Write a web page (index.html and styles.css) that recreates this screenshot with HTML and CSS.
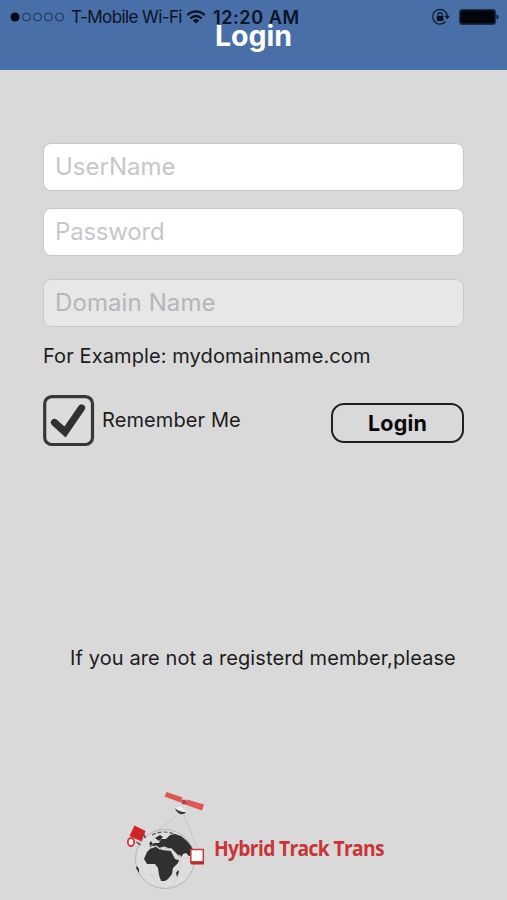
FILE: index.html
```html
<!DOCTYPE html>
<html lang="en">
<head>
<meta charset="utf-8">
<title>Login</title>
<link rel="stylesheet" href="styles.css">
</head>
<body>
<header class="header">
  <div class="status">
    <svg class="signal" width="56" height="12" viewBox="0 0 56 12">
      <circle cx="5" cy="6" r="4.5" fill="#050a12"/>
      <g fill="none" stroke="#1b3054" stroke-width="1"><circle cx="16.5" cy="6" r="4"/><circle cx="27.5" cy="6" r="4"/><circle cx="38.5" cy="6" r="4"/><circle cx="49.5" cy="6" r="4"/></g>
    </svg>
    <span class="carrier">T-Mobile Wi-Fi</span>
    <svg class="wifi" width="20" height="16" viewBox="0 0 20 16">
      <g fill="none" stroke="#08111f" stroke-width="2.2"><path d="M1.200 6Q10-1.400 18.800 6"/><path d="M4.400 9.300Q10 4.700 15.600 9.300"/></g>
      <path d="M6.700 11.400Q10 8.700 13.300 11.400L10 14.600Z" fill="#08111f"/>
    </svg>
    <span class="time">12:20 AM</span>
    <svg class="lock" width="20" height="18" viewBox="0 0 20 18">
      <path d="M14.600 13.500A7.300 7.300 0 1 1 16.300 8.500" fill="none" stroke="#101f38" stroke-width="1.300"/>
      <path d="M13.300 7.800h5.800l-2.900 3.700z" fill="#101f38"/>
      <rect x="5.800" y="8" width="6.600" height="5" rx=".6" fill="#08111f"/>
      <path d="M7.100 8.200V6.600a2 2 0 0 1 4 0v1.600" fill="none" stroke="#08111f" stroke-width="1.200"/>
    </svg>
    <svg class="battery" width="40" height="16" viewBox="0 0 40 16">
      <rect x=".7" y=".7" width="35.600" height="14.600" rx="2.500" fill="#02050a" stroke="#1b2d4b" stroke-width="1.400"/>
      <path d="M37.500 5.200q2 1 2 2.800t-2 2.800z" fill="#0b1629"/>
    </svg>
  </div>
  <h1 class="title">Login</h1>
</header>
<main class="form">
  <input class="field" type="text" placeholder="UserName" aria-label="UserName">
  <input class="field password" type="password" placeholder="Password" aria-label="Password">
  <input class="field domain" type="text" placeholder="Domain Name" aria-label="Domain Name" disabled>
  <p class="example">For Example: mydomainname.com</p>
  <div class="actions">
    <div class="remember">
      <svg class="check" width="52" height="52" viewBox="0 0 52 52">
        <rect x="1.700" y="1.700" width="47.800" height="47.800" rx="7" fill="#dcdcdc" stroke="#373737" stroke-width="3.200"/>
        <path d="M11.500 27.500L22 37L38.500 13" fill="none" stroke="#303030" stroke-width="7.200" stroke-linecap="round"/>
      </svg>
      <span class="remember-text">Remember Me</span>
    </div>
    <button class="login" type="button">Login</button>
  </div>
</main>
<p class="register">If you are not a registerd member,please</p>
<footer class="brand">
  <svg width="90" height="105" viewBox="0 0 90 105">
    <path d="M25 54L58 30M64 30L77 62" fill="none" stroke="#c2c2c2" stroke-width=".8"/>
    <circle cx="45" cy="74" r="29.500" fill="#dedede" stroke="#aaa" stroke-width=".8"/>
    <g fill="none" stroke="#cbcbcb" stroke-width=".5"><path d="M16 73h58M20 61q25-10 50 0M20 88q25 9 50 0"/><ellipse cx="45" cy="74" rx="16" ry="29"/></g>
    <path d="M32 50q12-6 24 0" fill="none" stroke="#555" stroke-width="1.200" stroke-dasharray="4 2"/>
    <g fill="#303030">
      <path d="M35 53l5-3 3 2-4 4zM29 59l2-3 2 3-2 2z"/>
      <path d="M31 62l3-4 5 0 2-4 5 0 4-4 5-1 6 2 6 5 4 5 3 6 0 4-5 0-3-3-3 1-2 4-5-5-4-4-5 0-4-2-5 1-4-2-5 0z"/>
      <path d="M27 67l4-4 7-2 4 4 9 1 4 8 4 1-1 3-5 5-1 6-4 5-3 2-4 0-2-6-1-7-3-4-8 0-3-5z"/>
      <path d="M56 88l2-3 1 2-2 5zM17 81l2 3 0 4-3-5z"/>
    </g>
    <path d="M31 63l5-2 4 3 4-2 5 2 3 0M52 67l5 7 4-2-2-2" fill="none" stroke="#d5d5d5" stroke-width="1.300"/>
    <path d="M46.500 7l16 5.500-2 5-16-6zM67 14.500l17 5-2 6-17-6z" fill="#dc5654"/>
    <path d="M58 14l12 5" stroke="#dc5654" stroke-width="1.500"/>
    <circle cx="64" cy="17" r="2.500" fill="#b84340"/>
    <path d="M55 23q5 4 11 4-2 3-6 2-4-2-5-6z" fill="#393939"/>
    <path d="M55 23q7-4 11 4-7 0-11-4z" fill="#eee"/>
    <path d="M14.500 40.500l11 5.500-4 10.500-12-5.500z" fill="#cf2528"/>
    <path d="M23.500 49l2 4M16.500 57l4 3" stroke="#464646" stroke-width="1.500"/>
    <ellipse cx="11" cy="57" rx="3.200" ry="4" fill="#eee" stroke="#d73636" stroke-width="1.800"/>
    <rect x="70.800" y="64.500" width="12.500" height="12.500" fill="#fff" stroke="#cf3434" stroke-width="1.500"/>
    <path d="M70 76.500h14v3H71z" fill="#c7262a"/>
  </svg>
  <span class="brand-name">Hybrid Track Trans</span>
</footer>
</body>
</html>
```

FILE: styles.css
```css
* { box-sizing: border-box; }
body {
  margin: 0;
  min-height: 900px;
  display: flex;
  flex-direction: column;
  background: #d9d9d9;
  color: #1c1c1c;
  font-family: Inter, "Liberation Sans", sans-serif;
  overflow: hidden;
}
.header { height: 70px; background: #486fa8; }
.status { display: flex; align-items: center; height: 34px; padding-left: 10px; color: #0a1424; white-space: nowrap; }
.signal { flex: none; }
.carrier { width: 111px; margin-left: 5px; font-size: 17px; letter-spacing: -0.6px; }
.wifi { flex: none; margin-left: 4px; }
.time { width: 89px; margin-left: 7px; font-size: 18px; font-weight: 600; letter-spacing: 0.6px; }
.lock { flex: none; margin-left: 129px; }
.battery { flex: none; margin-left: 8px; }
.title { position: relative; margin: -16px 0 0; text-align: center; color: #fff; font-size: 28.500px; line-height: 36px; font-weight: 700; }
.form { display: flex; flex-direction: column; padding: 73px 43px 0; }
.field {
  width: 421px;
  height: 48px;
  padding: 0 11px 2px;
  border: 1px solid #c8c8c8;
  border-radius: 8px;
  background: #fff;
  font: 24px Inter, sans-serif;
}
.field::placeholder { color: #c7c7ca; opacity: 1; }
.password { margin-top: 17px; }
.password::placeholder { letter-spacing: -0.2px; }
.domain { margin-top: 23px; background: #e7e7e7; }
.domain::placeholder { color: #b6b6ba; letter-spacing: 0.1px; }
.example { margin: 16px 0 0; font-size: 20px; line-height: 26px; white-space: nowrap; letter-spacing: 0.1px; }
.actions { display: flex; justify-content: space-between; margin-top: 26px; }
.remember { display: flex; }
.check { flex: none; }
.remember-text { margin: 12px 0 0 7px; font-size: 20px; line-height: 26px; white-space: nowrap; letter-spacing: 0.1px; }
.login {
  width: 133px;
  height: 40px;
  margin-top: 8px;
  padding: 0;
  border: 2px solid #202020;
  border-radius: 13px;
  background: transparent;
  color: #080808;
  font: 700 21.5px Inter, sans-serif;
  letter-spacing: 0.2px;
}
.register { margin: 198px 0 0 70px; font-size: 20px; line-height: 26px; white-space: nowrap; letter-spacing: 0.1px; }
.brand { display: flex; margin: 114px 0 0 120px; }
.brand-name { margin: 49px 0 0 4px; color: #c93437; font: 700 21px/28px "Open Sans", sans-serif; white-space: nowrap; letter-spacing: -0.7px; transform: scaleX(.915); transform-origin: left; }
```
